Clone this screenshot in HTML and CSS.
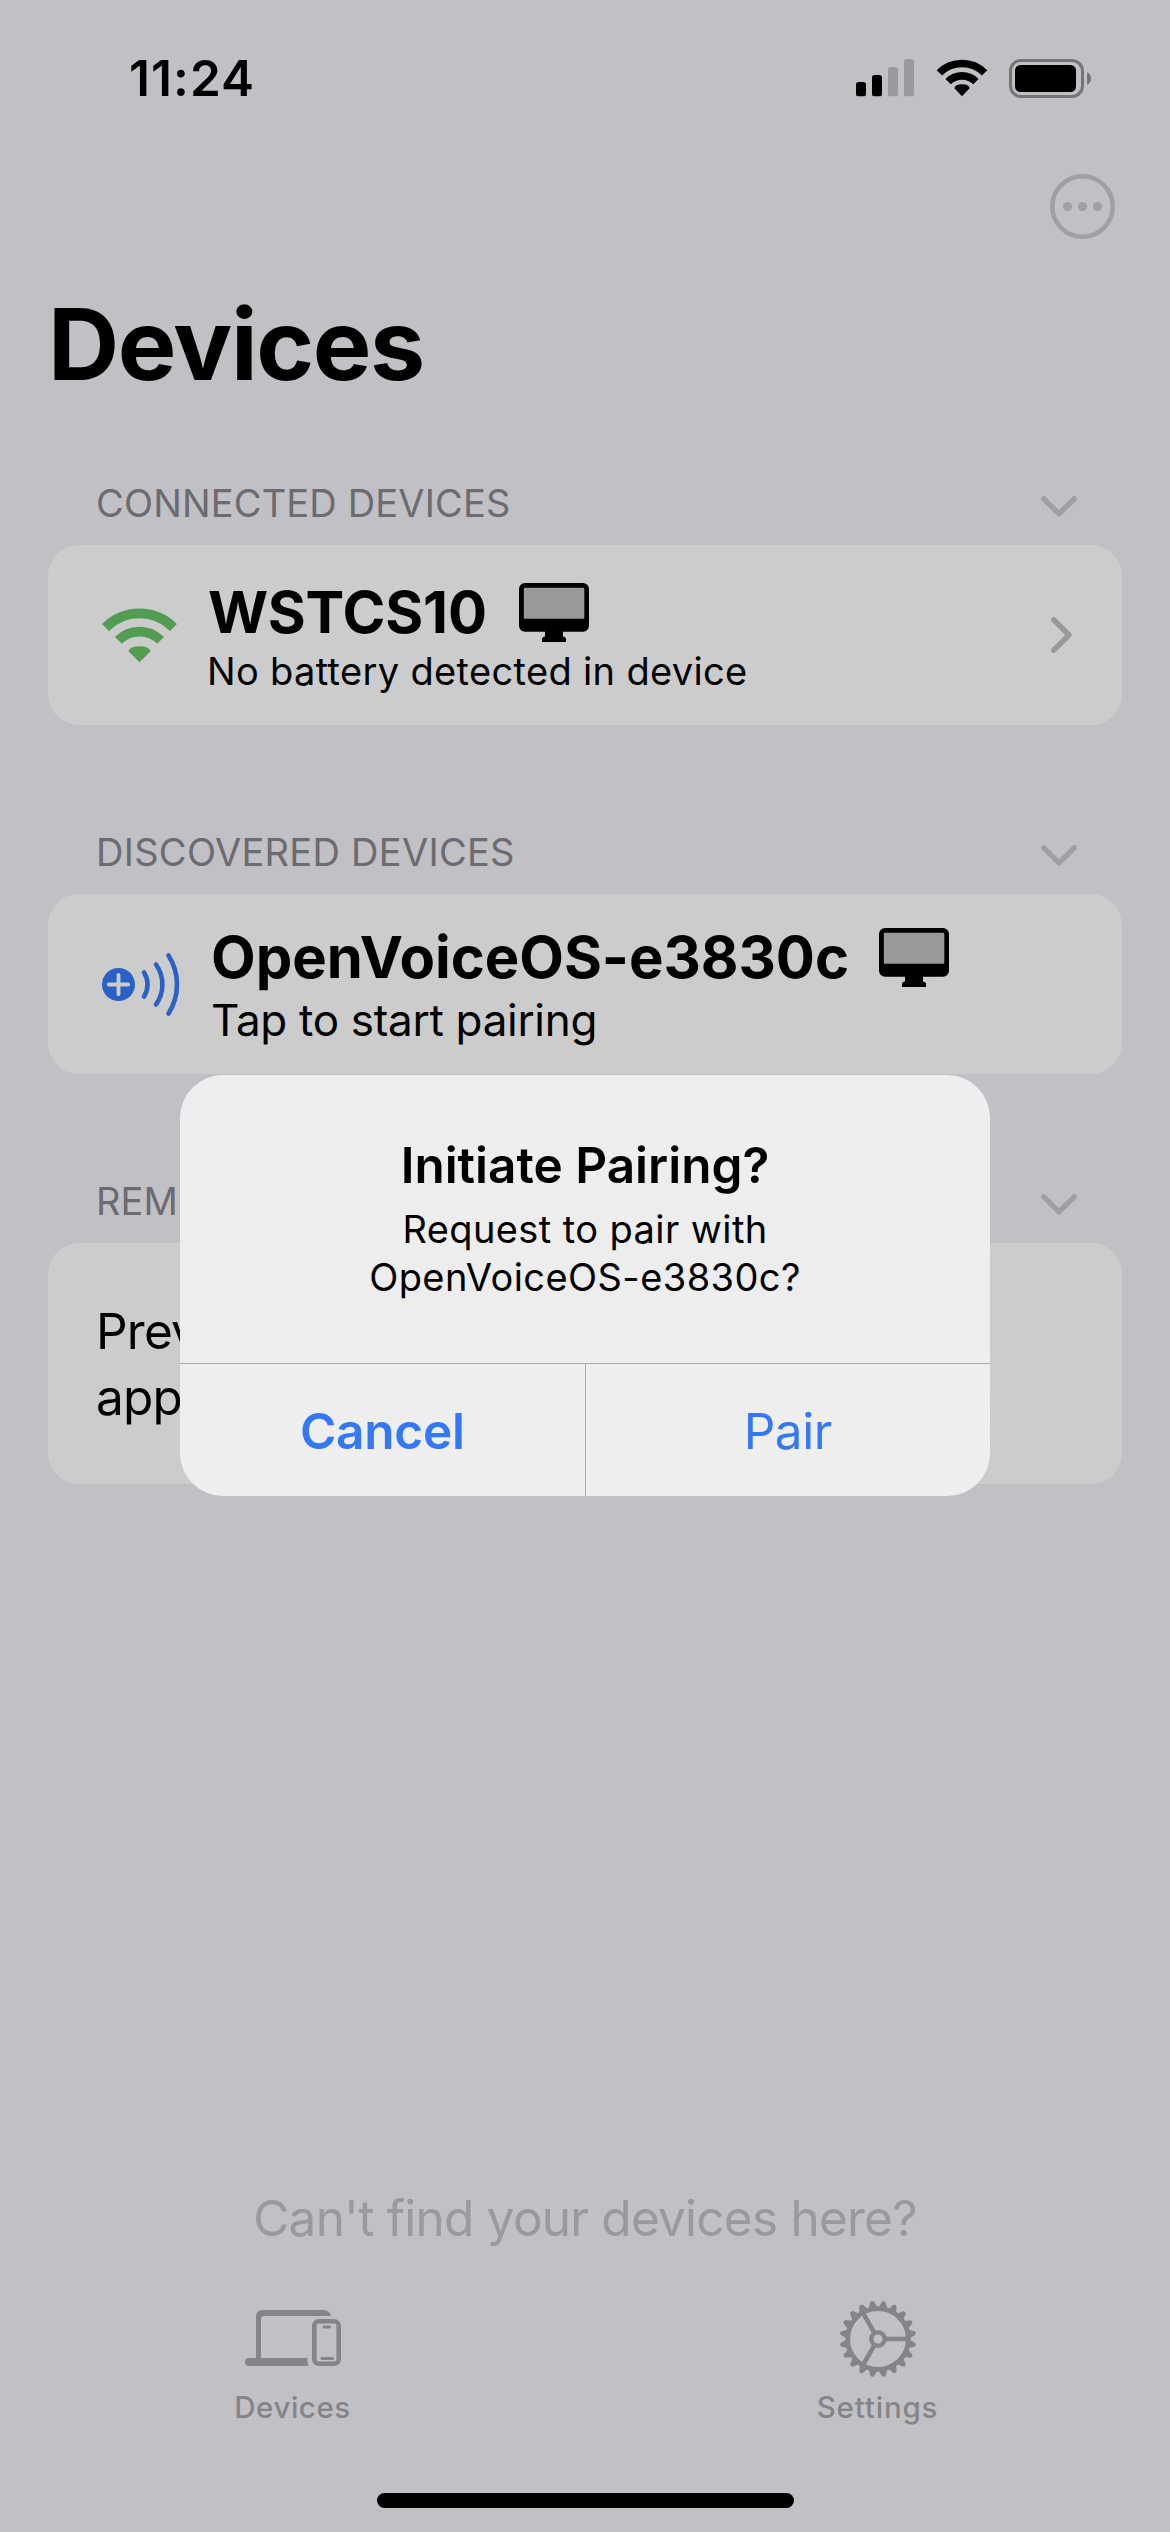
FILE: index.html
```html
<!DOCTYPE html>
<html lang="en">
<head>
<meta charset="utf-8">
<title>Devices</title>
<link rel="stylesheet" href="styles.css">
</head>
<body>
<div class="screen">
  <header class="status-bar">
    <time class="clock">11:24</time>
    <div class="status-icons">
      <svg class="signal" width="58" height="38" viewBox="0 0 58 38">
        <rect x="0" y="23" width="10" height="14.3" rx="2.6"/>
        <rect x="16" y="16" width="10" height="21.3" rx="2.6"/>
        <rect class="dim" x="32" y="8" width="10" height="29.3" rx="2.6"/>
        <rect class="dim" x="48" y="0" width="10" height="37.3" rx="2.6"/>
      </svg>
      <svg class="wifi" width="52" height="38" viewBox="0 0 52 38">
        <g fill="none" stroke="#000">
          <path stroke-width="7.6" d="M3.4 13.9A32 32 0 0 1 48.6 13.9"/>
          <path stroke-width="7.6" d="M12.1 22.6A19.7 19.7 0 0 1 39.9 22.6"/>
        </g>
        <path d="M26 37.2L18.4 29.3Q19 25.3 26 25.3T33.6 29.3Z"/>
      </svg>
      <svg class="battery" width="82" height="39" viewBox="0 0 82 39">
        <rect x="1.5" y="1.5" width="72" height="36" rx="10.5" fill="none" stroke="#757577" stroke-width="3"/>
        <rect x="6" y="6" width="61" height="27" rx="5.5"/>
        <path d="M78 13.3Q82 15 82 19.5T78 25.7Z" fill="#757577"/>
      </svg>
    </div>
  </header>

  <nav class="nav-bar">
    <svg width="65" height="65" viewBox="0 0 65 65">
      <circle cx="32.5" cy="32.5" r="30.2" fill="none" stroke="#a0a0a2" stroke-width="4.6"/>
      <g fill="#a0a0a2"><circle cx="17.5" cy="32.5" r="4.6"/><circle cx="32.5" cy="32.5" r="4.6"/><circle cx="47.5" cy="32.5" r="4.6"/></g>
    </svg>
  </nav>

  <h1 class="page-title">Devices</h1>

  <main class="sections">
    <section>
      <div class="section-head">
        <h2>CONNECTED DEVICES</h2>
        <svg class="chevron" width="36" height="21" viewBox="0 0 36 21"><path d="M2.8 2.8L18 17.8L33.2 2.8"/></svg>
      </div>
      <div class="card device connected">
        <svg class="device-icon" width="75" height="180" viewBox="0 0 75 180">
          <g fill="none" stroke="#519d52" stroke-width="9.8">
            <path d="M3.5 82.5A48 48 0 0 1 71.5 82.5"/>
            <path d="M16.4 95.4A29.8 29.8 0 0 1 58.6 95.4"/>
          </g>
          <path fill="#519d52" d="M37.5 117.2L26.4 106.2Q28 101.2 37.5 101.2T48.6 106.2Z"/>
        </svg>
        <div class="device-text">
          <div class="device-title">
            <span class="device-name">WSTCS10</span>
            <svg width="70" height="59" viewBox="0 0 70 59"><rect width="70" height="48.7" rx="6"/><rect x="4.8" y="4.8" width="60.5" height="30.9" rx="1" fill="#999"/><path d="M26 48H44V53.5Q47 54 47 56V59H23V56Q23 54 26 53.5Z"/></svg>
          </div>
          <p class="device-note">No battery detected in device</p>
        </div>
        <svg class="disclosure" width="21" height="36" viewBox="0 0 21 36"><path d="M2.8 2.8L18 18L2.8 33.2"/></svg>
      </div>
    </section>

    <section>
      <div class="section-head">
        <h2 class="discovered-label">DISCOVERED DEVICES</h2>
        <svg class="chevron" width="36" height="21" viewBox="0 0 36 21"><path d="M2.8 2.8L18 17.8L33.2 2.8"/></svg>
      </div>
      <div class="card device discovered">
        <svg class="device-icon" width="79" height="180" viewBox="0 0 79 180">
          <circle cx="16.5" cy="90.5" r="16.5" fill="#2a61c8"/>
          <path d="M6.8 90.5H26.2M16.5 80.8V100.2" fill="none" stroke="#ccc" stroke-width="3.8" stroke-linecap="round"/>
          <g fill="none" stroke="#2a61c8" stroke-width="4.6" stroke-linecap="round">
            <path d="M42 78.5A22 22 0 0 1 42 102.5"/>
            <path d="M54 70.5A34.5 34.5 0 0 1 54 110.5"/>
            <path d="M66.5 61.5A53.7 53.7 0 0 1 66.5 119.5"/>
          </g>
        </svg>
        <div class="device-text">
          <div class="device-title">
            <span class="device-name">OpenVoiceOS-e3830c</span>
            <svg width="70" height="59" viewBox="0 0 70 59"><rect width="70" height="48.7" rx="6"/><rect x="4.8" y="4.8" width="60.5" height="30.9" rx="1" fill="#999"/><path d="M26 48H44V53.5Q47 54 47 56V59H23V56Q23 54 26 53.5Z"/></svg>
          </div>
          <p class="device-note">Tap to start pairing</p>
        </div>
      </div>
    </section>

    <section>
      <div class="section-head">
        <h2>REM</h2>
        <svg class="chevron" width="36" height="21" viewBox="0 0 36 21"><path d="M2.8 2.8L18 17.8L33.2 2.8"/></svg>
      </div>
      <p class="card empty-note">Prev<br>app</p>
    </section>
  </main>

  <footer>
    <p class="hint">Can't find your devices here?</p>
    <div class="tabs">
      <div class="tab tab-devices">
        <svg width="98" height="80" viewBox="0 0 98 80">
          <path d="M12 60V18Q12 11 19 11H79Q86 11 87 17H20Q17 17 17 20V59H63.5Q63 63 64.5 67H5Q1 67 1 63T5 59H12Z"/>
          <rect x="70.3" y="22.3" width="24.4" height="42.4" rx="4.5" fill="none" stroke="#858587" stroke-width="4.6"/>
          <path d="M80 28H85.5M78 59.5H88.5" fill="none" stroke="#858587" stroke-width="3" stroke-linecap="round"/>
        </svg>
        <span>Devices</span>
      </div>
      <div class="tab tab-settings">
        <svg width="80" height="80" viewBox="-40 -40 80 80">
          <defs>
            <path id="tooth" d="M-4.5 -31L-1.9 -37.3Q0 -39.3 1.9 -37.3L4.5 -31Z"/>
            <g id="teeth"><use href="#tooth" transform="rotate(9)"/><use href="#tooth" transform="rotate(27)"/><use href="#tooth" transform="rotate(45)"/><use href="#tooth" transform="rotate(63)"/><use href="#tooth" transform="rotate(81)"/></g>
            <g id="half"><use href="#tooth" transform="rotate(9)"/><use href="#tooth" transform="rotate(27)"/><use href="#tooth" transform="rotate(-9)"/><use href="#tooth" transform="rotate(-27)"/><use href="#tooth" transform="rotate(45)"/><use href="#tooth" transform="rotate(-45)"/><use href="#tooth" transform="rotate(63)"/><use href="#tooth" transform="rotate(-63)"/><use href="#tooth" transform="rotate(81)"/></g>
          </defs>
          <use href="#half" transform="scale(1 1)"/>
          <use href="#tooth" transform="rotate(72) scale(0)"/>
          <use href="#teeth" transform="rotate(90)"/><use href="#teeth" transform="rotate(180)"/><use href="#teeth" transform="rotate(270)"/>
          <g fill="none" stroke="#858587">
            <circle r="30.3" stroke-width="4.8"/>
            <circle r="6.7" stroke-width="4.4"/>
            <path stroke-width="4.6" d="M8 0H29M-4 -6.930L-14.5 -25.1M-4 6.930L-14.5 25.1"/>
          </g>
        </svg>
        <span>Settings</span>
      </div>
    </div>
    <div class="home-indicator"></div>
  </footer>

  <div class="alert" role="dialog">
    <div class="alert-body">
      <h3>Initiate Pairing?</h3>
      <p>Request to pair with<br>OpenVoiceOS-e3830c?</p>
    </div>
    <div class="alert-actions">
      <button class="cancel">Cancel</button>
      <button>Pair</button>
    </div>
  </div>
</div>
</body>
</html>
```
FILE: styles.css
```css
* { box-sizing: border-box; margin: 0; padding: 0; }
body { background: #c1c0c5; font-family: Inter, "Liberation Sans", sans-serif; color: #000; }
svg { display: block; flex: none; }

.screen {
  position: relative;
  width: 1170px;
  height: 2532px;
  display: flex;
  flex-direction: column;
  overflow: hidden;
  background: #c1c0c5;
}

.status-bar {
  height: 156px;
  padding: 0 79px 0 129px;
  display: flex;
  align-items: center;
  justify-content: space-between;
}
.clock { font-size: 49.5px; font-weight: 600; letter-spacing: 1.1px; line-height: 60px; }
.status-icons { display: flex; align-items: center; }
.signal .dim { fill: #9a9a9c; }
.wifi { margin-left: 21.5px; }
.battery { margin-left: 21.5px; }

.nav-bar {
  height: 101px;
  padding-right: 55px;
  display: flex;
  align-items: center;
  justify-content: flex-end;
}

.page-title {
  margin-top: 28px;
  padding-left: 48px;
  font-size: 98.5px;
  font-weight: 700;
  line-height: 120px;
  letter-spacing: -1.4px;
}

.sections { flex: 1; padding-top: 68px; display: flex; flex-direction: column; gap: 97px; }
.section-head {
  height: 60px;
  margin-bottom: 12px;
  padding: 0 93px 0 96px;
  display: flex;
  align-items: center;
  justify-content: space-between;
}
.section-head h2 { font-size: 38px; font-weight: 400; line-height: 60px; letter-spacing: 0.16px; color: #6c6b70; }
.section-head .discovered-label { letter-spacing: 0.28px; }
.chevron { margin-top: 7px; }
.chevron path, .disclosure path {
  fill: none;
  stroke: #a0a0a2;
  stroke-width: 5.4px;
  stroke-linecap: round;
  stroke-linejoin: round;
}
.disclosure path { stroke: #999; }

.card { margin: 0 48px; border-radius: 31px; background: #ccc; }
.device { height: 180px; padding: 0 50px 0 54px; display: flex; align-items: center; gap: 30px; }
.device-text { flex: 1; align-self: flex-start; padding-top: 32px; white-space: nowrap; }
.device-title { height: 70px; display: flex; align-items: center; gap: 30px; }
.device-name { font-size: 58px; font-weight: 700; line-height: 70px; letter-spacing: -0.1px; }
.connected .device-name { padding: 0 2px 0 1px; }
.device-note { font-size: 38px; line-height: 48px; letter-spacing: 0.34px; }
.discovered .device-text { padding-top: 28px; }
.discovered .device-name { letter-spacing: -0.05px; }
.discovered .device-note { font-size: 44px; line-height: 57px; letter-spacing: -0.3px; }
.empty-note { height: 241px; padding: 55px 48px; font-size: 49.5px; line-height: 66px; letter-spacing: -0.76px; }

footer { display: flex; flex-direction: column; padding-bottom: 24px; }
.hint { text-align: center; font-size: 49.5px; line-height: 60px; letter-spacing: -0.76px; color: #9a9a9c; }
.tabs { display: flex; margin-top: 51px; }
.tab {
  flex: 1;
  display: flex;
  flex-direction: column;
  align-items: center;
  gap: 8px;
  font-size: 29.5px;
  font-weight: 500;
  line-height: 40px;
  letter-spacing: 0.53px;
  color: #858587;
  fill: #858587;
}
.tab-settings { letter-spacing: 0.84px; }
.home-indicator { width: 417px; height: 15px; margin: 66px auto 0; border-radius: 8px; background: #000; }

.alert {
  position: absolute;
  left: 180px;
  top: 1075px;
  width: 810px;
  height: 421px;
  border-radius: 43px;
  overflow: hidden;
  display: flex;
  flex-direction: column;
  background: linear-gradient(#eeeef0, #ededed 60%, #efefef);
  text-align: center;
}
.alert-body { height: 288px; padding-top: 60px; }
.alert-body h3 { font-size: 49.5px; font-weight: 600; line-height: 60px; }
.alert-body p { margin-top: 10px; font-size: 38px; line-height: 48px; letter-spacing: 0.41px; }
.alert-actions { flex: 1; display: flex; border-top: 1px solid #acacae; }
.alert-actions button {
  flex: 1;
  border: 0;
  padding-top: 2px;
  background: none;
  font: 400 49.5px/60px Inter, "Liberation Sans", sans-serif;
  letter-spacing: -0.47px;
  color: #3478f6;
}
.alert-actions .cancel { font-weight: 600; letter-spacing: -0.26px; border-right: 1px solid #acacae; }
```
